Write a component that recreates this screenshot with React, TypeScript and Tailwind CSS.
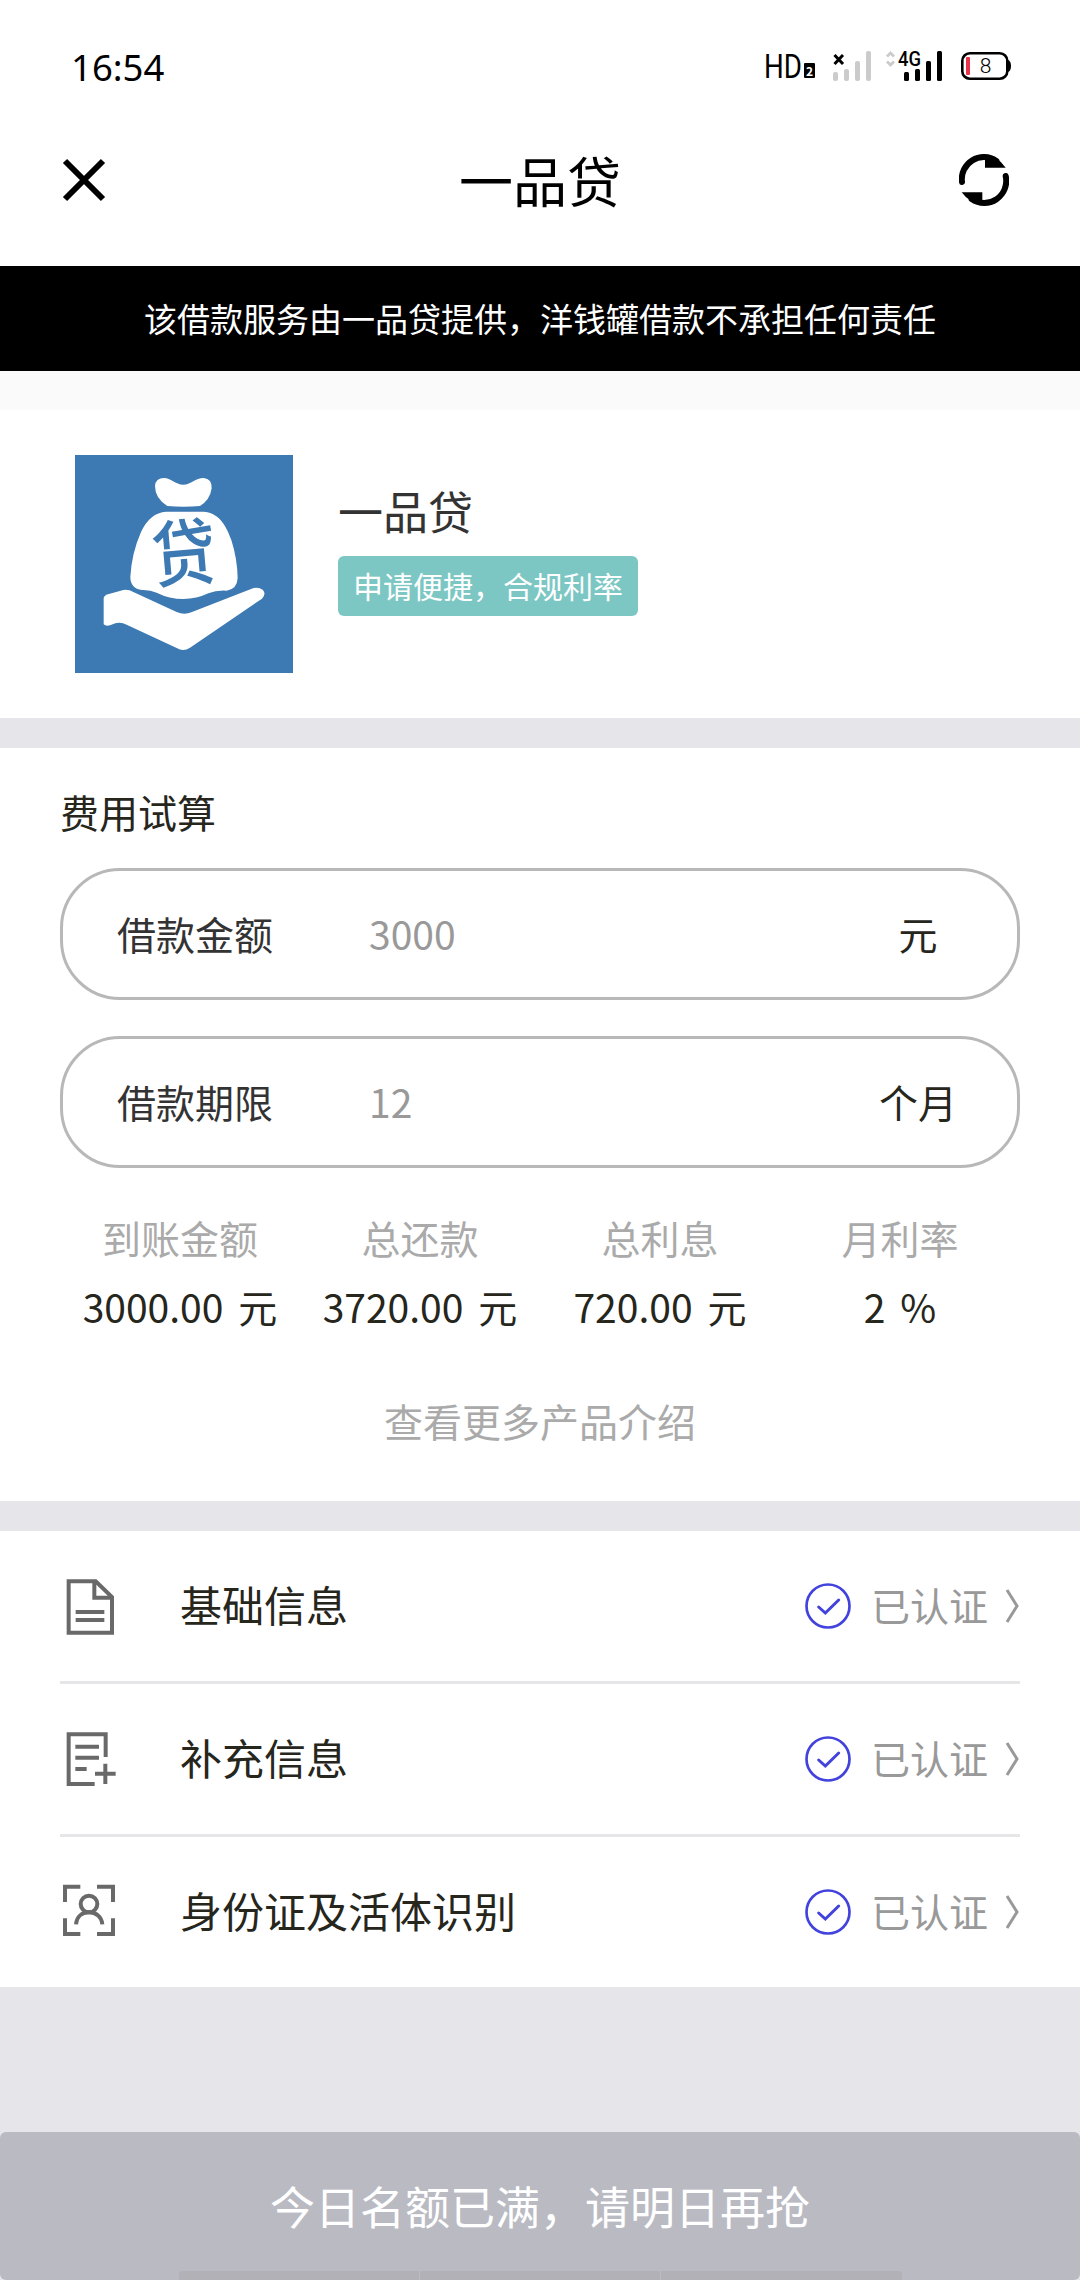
import type { ReactNode } from 'react';

function StatusBar() {
  return (
    <div className="flex h-[104px] items-start justify-between pl-[71px] pr-[68px]">
      <span className="mt-[41px] font-['Noto_Sans'] text-[36.500px] leading-[52px] text-black">16:54</span>
      <div className="mt-[48px] flex h-9 items-start">
        <svg className="-mt-[4px]" width="41" height="46" viewBox="0 -6 41 46">
          <text x="1" y="28" fontSize="33" fontFamily="Roboto" textLength="38" lengthAdjust="spacingAndGlyphs">HD</text>
        </svg>
        <span className="mt-[15px] flex h-[15px] w-[11px] items-center justify-center rounded-[1px] bg-black text-[12px] font-bold leading-none text-white">2</span>
        <svg className="ml-[17px] mt-[2px]" width="41" height="33" viewBox="0 0 41 33">
          <path d="M2.500 5L11 14M11 5L2.500 14" stroke="#000" strokeWidth="3" />
          <g fill="#cbcbcb">
            <rect x="1" y="22" width="5" height="9" rx="2" />
            <rect x="12" y="19" width="5" height="12" rx="2" />
            <rect x="23" y="11" width="5" height="20" rx="2" />
            <rect x="34" y="1" width="5" height="30" rx="2" />
          </g>
        </svg>
        <svg className="ml-[12px] -mt-[4px]" width="60" height="39" viewBox="0 -6 60 39">
          <path d="M2 6.500L5.500 3L9 6.500M2 11.500L5.500 15L9 11.500" fill="none" stroke="#cbcbcb" strokeWidth="2.800" />
          <text x="13" y="15.500" fontSize="20" fontWeight="500" fontFamily="Roboto" textLength="23" lengthAdjust="spacingAndGlyphs">4G</text>
          <rect x="19" y="22" width="5" height="9" rx="1.500" />
          <rect x="30" y="19" width="5" height="12" rx="1.500" />
          <rect x="41" y="11" width="5" height="20" rx="1.500" />
          <rect x="52" y="1" width="5" height="30" rx="1.500" />
        </svg>
        <svg className="ml-[15px] mt-[3px]" width="52" height="30" viewBox="0 0 52 30">
          <rect x="2.300" y="2.300" width="45" height="25.400" rx="7.500" fill="none" stroke="#000" strokeWidth="2.600" />
          <path d="M48 9q3 1 3 6t-3 6z" />
          <rect x="6" y="6" width="4" height="18" rx="1" fill="#e8334a" />
          <text x="25.500" y="22" fontSize="21" fontWeight="300" fontFamily="Roboto" textAnchor="middle">8</text>
        </svg>
      </div>
    </div>
  );
}

function NavBar() {
  return (
    <div className="flex h-[162px] items-start justify-between pl-[60px] pr-[71px]">
      <svg className="mt-[54px]" width="48" height="44" viewBox="0 0 48 44">
        <path d="M5 3L43 41M43 3L5 41" stroke="#000" strokeWidth="6" />
      </svg>
      <h1 className="mt-[36px] pl-[13px] text-[54px] leading-[80px] text-black">一品贷</h1>
      <svg className="mt-[50px]" width="50" height="52" viewBox="0 0 150 156">
        <path d="M9 84A66 66 0 0 1 112 21M140 66A66 66 0 0 1 38 135" fill="none" stroke="#000" strokeWidth="18" strokeLinecap="round" />
        <path d="M78 4Q116 6 140 41H78ZM70 115H8Q32 148 70 152Z" />
      </svg>
    </div>
  );
}

function MoneyBagLogo() {
  return (
    <svg width="218" height="218" viewBox="45 45 654 654" className="bg-[#3d79b2]">
      <g fill="#fff">
        <path d="M322 198Q285 175 285 138Q287 114 312 114C332 114 346 134 370 134C394 134 406 114 431 114Q456 116 455 145Q450 180 420 198Q370 202 322 198Z" />
        <path d="M318 215H430C474 218 496 250 514 300Q532 356 533 415Q531 448 500 452Q470 450 445 460Q410 477 370 477Q328 477 290 458Q270 449 246 450Q211 445 211 410Q215 340 243 276Q270 218 318 215Z" />
        <path d="M131 474Q133 466 144 463L190 450Q205 447 220 456L350 516Q373 526 396 516L575 446Q594 439 608 449Q620 461 606 476L390 623Q370 636 350 624L200 554Q180 543 160 552Q140 562 131 553Z" />
      </g>
      <text x="275" y="420" fontSize="218" fontWeight="500" fill="#3d79b2" textLength="192" lengthAdjust="spacingAndGlyphs" transform="rotate(-5 370 335)">贷</text>
    </svg>
  );
}

function Field({ label, value, unit }: { label: string; value: string; unit: string }) {
  return (
    <div className="flex h-[132px] items-center rounded-[60px] border-[3px] border-[#b8b8b8] pb-[2px] pl-[54px] pr-[19px]">
      <label className="w-[252px] text-[#333]">{label}</label>
      <span className="flex-1 text-[#999]">{value}</span>
      <span className="w-40 text-center">{unit}</span>
    </div>
  );
}

function Stat({ label, value, unit }: { label: string; value: string; unit: string }) {
  return (
    <div className="flex flex-col items-center whitespace-nowrap">
      <span className="leading-[60px] text-[#aaa]">{label}</span>
      <span className="mt-[9px] flex gap-[15px] leading-[60px]">
        <span>{value}</span>
        <span>{unit}</span>
      </span>
    </div>
  );
}

function DocumentIcon() {
  return (
    <svg width="60" height="60" viewBox="0 0 180 180" fill="none" stroke="#696969" strokeWidth="12">
      <path d="M26 16H107L156 63V170H26ZM103 18V65H155M47 108H133M47 132H133" />
    </svg>
  );
}

function DocumentPlusIcon() {
  return (
    <svg width="60" height="60" viewBox="0 0 180 180" fill="none" stroke="#696969" strokeWidth="12">
      <path d="M137 84V16H26V165H104M46 53H117M46 86H117M46 120H80M105 134H167M136 104V165" />
    </svg>
  );
}

function FaceScanIcon() {
  return (
    <svg width="60" height="60" viewBox="0 0 180 180" fill="none" stroke="#696969" strokeWidth="12">
      <path d="M15 60V14H61M111 14H159V60M15 109V156H61M111 156H159V109" />
      <circle cx="87" cy="66" r="25" />
      <path d="M48 127C50 104 66 91 87 91S125 104 127 127" />
    </svg>
  );
}

function InfoRow({ icon, title }: { icon: ReactNode; title: string }) {
  return (
    <div className="box-content flex h-[150px] items-center">
      {icon}
      <span className="-mt-[4px] ml-[60px] flex-1 text-[42px]">{title}</span>
      <svg width="46" height="46" viewBox="0 0 138 138" fill="none" stroke="#4242dc" strokeLinecap="round">
        <circle cx="69" cy="69" r="64.500" strokeWidth="8" />
        <path d="M41 72L61 90L101 51" strokeWidth="9" />
      </svg>
      <span className="-mt-[5px] ml-[20px] text-[#999]">已认证</span>
      <svg className="ml-[17px]" width="15" height="36" viewBox="0 0 15 36" fill="none" stroke="#999" strokeWidth="3">
        <path d="M2 2L12 18L2 34" />
      </svg>
    </div>
  );
}

export default function App() {
  return (
    <div className="flex h-[2280px] w-[1080px] flex-col overflow-hidden bg-[#e6e6ea] font-['Noto_Sans_CJK_SC',sans-serif] text-[39px] leading-[58px] text-[#26261c]" lang="zh-CN">
      <header className="bg-white">
        <StatusBar />
        <NavBar />
      </header>
      <p className="flex h-[105px] items-center justify-center bg-black pb-[2px] text-[33px] text-white">该借款服务由一品贷提供，洋钱罐借款不承担任何责任</p>
      <div className="h-[39px] bg-[#fafafa]" />
      <section className="flex h-[308px] items-start bg-white pl-[75px] pt-[45px]">
        <MoneyBagLogo />
        <div className="ml-[45px] pt-[23px]">
          <h2 className="text-[45px] leading-[66px] text-[#333]">一品贷</h2>
          <span className="mt-[12px] flex h-[60px] items-center rounded-md bg-[#7cc7c3] px-[15px] pb-[2px] text-[30px] text-white">申请便捷，合规利率</span>
        </div>
      </section>
      <section className="mt-[30px] flex h-[753px] flex-col bg-white px-[60px] pt-[34px]">
        <h2>费用试算</h2>
        <div className="mt-[28px] flex flex-col gap-9">
          <Field label="借款金额" value="3000" unit="元" />
          <Field label="借款期限" value="12" unit="个月" />
        </div>
        <div className="mt-[39px] grid grid-cols-4">
          <Stat label="到账金额" value="3000.00" unit="元" />
          <Stat label="总还款" value="3720.00" unit="元" />
          <Stat label="总利息" value="720.00" unit="元" />
          <Stat label="月利率" value="2" unit="%" />
        </div>
        <a className="mt-[55px] text-center text-[#aaa]">查看更多产品介绍</a>
      </section>
      <section className="mt-[30px] divide-y-[3px] divide-[#e6e6e8] bg-white px-[60px]">
        <InfoRow icon={<DocumentIcon />} title="基础信息" />
        <InfoRow icon={<DocumentPlusIcon />} title="补充信息" />
        <InfoRow icon={<FaceScanIcon />} title="身份证及活体识别" />
      </section>
      <div className="mt-auto flex h-[148px] flex-col items-center justify-between rounded-md bg-[#babac3]">
        <button className="mt-[38px] text-[45px] leading-[72px] text-white">今日名额已满，请明日再抢</button>
        <div className="flex h-[9px] w-[723px] divide-x divide-[#bdbdc3] overflow-hidden rounded-t bg-[#b2b1b7]">
          <span className="flex-1" />
          <span className="flex-1" />
          <span className="flex-1" />
        </div>
      </div>
    </div>
  );
}
